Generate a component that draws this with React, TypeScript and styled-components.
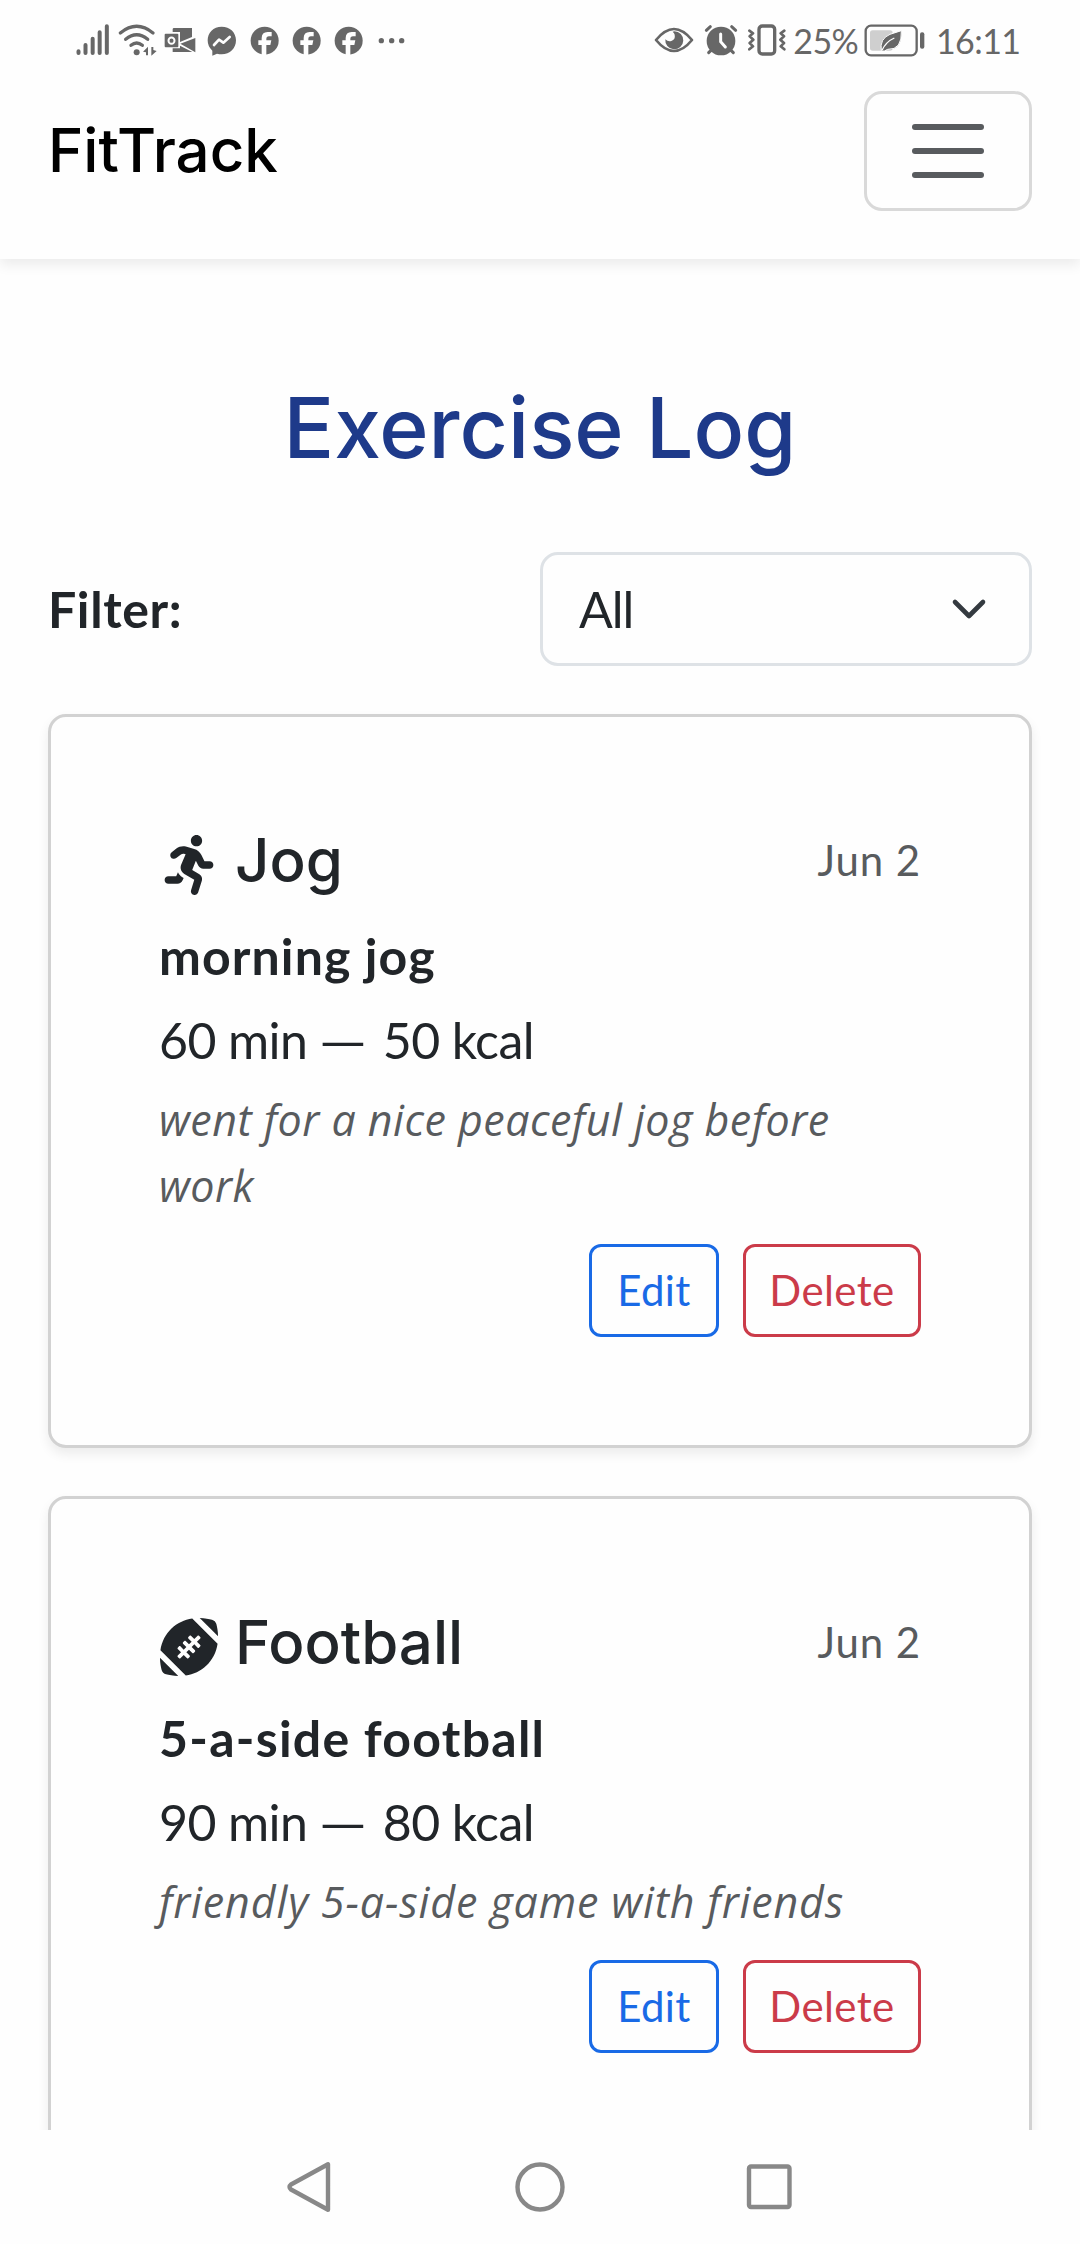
import React from "react";
import styled, { createGlobalStyle } from "styled-components";
import { FaFootballBall, FaRunning } from "react-icons/fa";

const GlobalStyle = createGlobalStyle`
  *, *::before, *::after { box-sizing: border-box; }
  html, body { margin: 0; padding: 0; }
  body {
    background: #fefefe;
    color: #212529;
    font-family: Lato, "Liberation Sans", sans-serif;
  }
`;

const Screen = styled.div`
  display: flex;
  flex-direction: column;
  width: 1080px;
  height: 2244px;
  overflow: hidden;
`;

const Header = styled.header`
  flex: none;
  height: 259px;
  background: #fefefe;
  box-shadow: 0 6px 12px rgba(0, 0, 0, 0.075);
`;

const StatusBar = styled.div`
  display: flex;
  justify-content: space-between;
  height: 91px;
  padding: 10px 63px 0 73px;
  color: #676767;
`;

const StatusGroup = styled.div`
  display: flex;
  height: 60px;
`;

const Glyph = styled.svg<{ $w: number }>`
  display: block;
  flex: none;
  width: ${(p) => p.$w}px;
  height: 60px;
  fill: currentColor;
`;

const StatusText = styled.span<{ $w: number; $indent?: number }>`
  width: ${(p) => p.$w}px;
  padding-left: ${(p) => p.$indent ?? 0}px;
  font-size: 34px;
  line-height: 62px;
  letter-spacing: -0.6px;
  white-space: nowrap;
`;

const NavRow = styled.div`
  display: flex;
  align-items: center;
  justify-content: space-between;
  height: 120px;
  padding: 0 48px;
`;

const Brand = styled.span`
  color: #000;
  font: 500 60px/90px Inter, sans-serif;
  padding-bottom: 2px;
`;

const Toggler = styled.button`
  display: flex;
  flex-direction: column;
  align-items: center;
  justify-content: center;
  gap: 18px;
  width: 168px;
  height: 120px;
  padding: 0;
  border: 3px solid #d9d9d9;
  border-radius: 18px;
  background: transparent;
`;

const TogglerLine = styled.span`
  width: 72px;
  height: 6px;
  border-radius: 3px;
  background: #585b5e;
`;

const Main = styled.main`
  flex: 1;
  min-height: 0;
  padding: 118px 48px 0;
  overflow: hidden;
`;

const Title = styled.h1`
  margin: 0 0 74px;
  color: #1e3a8a;
  font: 500 84px/101px Inter, sans-serif;
  text-align: center;
`;

const FilterRow = styled.div`
  display: flex;
  align-items: center;
  justify-content: space-between;
  height: 114px;
  margin-bottom: 48px;
`;

const FilterLabel = styled.label`
  font-size: 50px;
  line-height: 72px;
  font-weight: 700;
  letter-spacing: 0.6px;
`;

const Select = styled.div`
  display: flex;
  align-items: center;
  justify-content: space-between;
  width: 492px;
  height: 114px;
  padding: 0 41px 0 36px;
  border: 3px solid #dee2e6;
  border-radius: 18px;
  font-size: 50px;
  line-height: 72px;
  letter-spacing: -1px;
`;

const Chevron = styled.svg`
  width: 38px;
  height: 38px;
  fill: none;
  stroke: #343a40;
  stroke-width: 4.6;
  stroke-linecap: round;
  stroke-linejoin: round;
`;

const Card = styled.article`
  margin-bottom: 48px;
  padding: 108px;
  border: 3px solid #d2d2d2;
  border-radius: 18px;
  background: #fefefe;
  box-shadow: 0 6px 12px rgba(0, 0, 0, 0.075);
`;

const CardHead = styled.div`
  display: flex;
  align-items: center;
  justify-content: space-between;
  height: 70px;
  margin-bottom: 25px;
`;

const Activity = styled.h2`
  display: flex;
  align-items: center;
  gap: 16px;
  margin: 0;
  font: 500 60px/72px Inter, sans-serif;
`;

const ActivityIcon = styled.span`
  display: flex;
  width: 60px;
  padding-top: 10px;
`;

const DateText = styled.span`
  color: #585b5e;
  font-size: 42px;
  line-height: 72px;
  letter-spacing: 0.9px;
`;

const Name = styled.div<{ $tracking: number }>`
  margin-bottom: 12px;
  font-size: 50px;
  line-height: 72px;
  font-weight: 700;
  letter-spacing: ${(p) => p.$tracking}px;
`;

const Stats = styled.div`
  margin-bottom: 11px;
  font-size: 50px;
  line-height: 72px;
  letter-spacing: -0.6px;
`;

const Dash = styled.span`
  display: inline-block;
  margin: 0 8px 0 4px;
  transform: scaleX(1.22);
`;

const Note = styled.p<{ $tracking: number }>`
  margin: 0 0 25px;
  padding-right: 24px;
  color: #585b5e;
  font: italic 400 43px/66px "Open Sans", sans-serif;
  letter-spacing: ${(p) => p.$tracking}px;
`;

const Actions = styled.div`
  display: flex;
  justify-content: flex-end;
  gap: 24px;
`;

const ActionButton = styled.button<{ $color: string; $w: number }>`
  width: ${(p) => p.$w}px;
  height: 93px;
  padding: 0;
  border: 3px solid ${(p) => p.$color};
  border-radius: 12px;
  background: transparent;
  color: ${(p) => p.$color};
  font: 400 42px/63px Lato, sans-serif;
  letter-spacing: 0.4px;
`;

const SystemNav = styled.nav`
  display: flex;
  flex: none;
  align-items: flex-start;
  justify-content: center;
  gap: 180px;
  height: 114px;
  padding-top: 31px;
  background: #fefefe;
`;

const NavIcon = styled.svg`
  width: 52px;
  height: 52px;
  fill: none;
  stroke: #888;
  stroke-width: 4.4;
  stroke-linejoin: round;
`;

const Facebook = () => (
  <Glyph $w={42} viewBox="0 0 126 180">
    <circle cx="62" cy="92" r="42" />
    <path
      d="M53 136V105H43V91H53V84Q53 66 71 66H83V79H75Q67 79 67 87V91H82L79 105H67V136Z"
      fill="#fefefe"
    />
  </Glyph>
);

const LeftStatus = () => (
  <StatusGroup>
    <Glyph $w={42} viewBox="40 0 126 180">
      <g stroke="currentColor" strokeWidth="12" strokeLinecap="round">
        <path d="M56.500 124V129M77.500 105V129M99 86V129M120 67V129M141.500 49V129" />
      </g>
    </Glyph>
    <Glyph $w={45} viewBox="166 0 135 180">
      <g fill="none" stroke="currentColor" strokeWidth="10" strokeLinecap="round">
        <path d="M182 69Q231 29 280 69M198 88Q231 61 264 88M214 106Q231 92 248 106" />
      </g>
      <circle cx="231" cy="127" r="9" />
      <path d="M250 125L265 110V136H259V127ZM291 123L275 137V111H281V120Z" />
    </Glyph>
    <Glyph $w={42} viewBox="301 0 126 180">
      <path d="M343 54H397V81L361 96V66H339V58Q339 54 343 54Z" />
      <path d="M362 101L407 84V127ZM361 107L398 126H339V115H361Z" />
      <rect x="315" y="71" width="41" height="41" rx="3" />
      <ellipse cx="335.500" cy="92" rx="9" ry="9.500" fill="none" stroke="#fefefe" strokeWidth="6" />
    </Glyph>
    <Glyph $w={41.667} viewBox="427 0 125 180">
      <path d="M486 50C461 50 444 68 444 91Q444 110 458 122V137L472 131Q479 133 486 133C511 133 529 115 529 91S511 50 486 50Z" />
      <path
        d="M463 105L478 89L491 98L510 81"
        fill="none"
        stroke="#fefefe"
        strokeWidth="8"
        strokeLinejoin="round"
        strokeLinecap="round"
      />
    </Glyph>
    <Facebook />
    <Facebook />
    <Facebook />
    <Glyph $w={40} viewBox="930 0 120 180">
      <circle cx="964" cy="92" r="8" />
      <circle cx="995" cy="92" r="8" />
      <circle cx="1025" cy="92" r="8" />
    </Glyph>
  </StatusGroup>
);

const RightStatus = () => (
  <StatusGroup>
    <Glyph $w={50} viewBox="30 0 150 180">
      <path
        d="M48 90Q102 24 156 90Q102 156 48 90Z"
        fill="none"
        stroke="currentColor"
        strokeWidth="8"
        strokeLinejoin="round"
      />
      <path d="M103 64A27 27 0 1 1 76 88Q84 96 94 93Q107 88 104 74Q103 69 98 65Z" />
    </Glyph>
    <Glyph $w={43.333} viewBox="180 0 130 180">
      <circle cx="243" cy="93" r="43" />
      <g fill="none" stroke="currentColor" strokeWidth="9" strokeLinecap="round">
        <path d="M199 61L211 50M287 61L275 50M213 121L206 128M273 121L280 128" />
      </g>
      <path d="M242 72V95L256 111" fill="none" stroke="#fefefe" strokeWidth="9" strokeLinecap="round" />
    </Glyph>
    <Glyph $w={48} viewBox="310 0 144 180">
      <g fill="none" stroke="currentColor">
        <rect x="358" y="48" width="47" height="84" rx="10" strokeWidth="10" />
        <path
          d="M329 62L340 70L330 79L341 89L330 99L340 109L329 118M434 62L423 70L433 79L422 89L433 99L423 109L434 118"
          strokeWidth="8"
          strokeLinejoin="round"
          strokeLinecap="round"
        />
      </g>
    </Glyph>
    <StatusText $w={68.667} $indent={2}>25%</StatusText>
    <Glyph $w={76} viewBox="660 0 228 180">
      <rect x="677" y="47" width="153" height="89" rx="16" fill="none" stroke="currentColor" strokeWidth="7" />
      <rect x="690" y="61" width="68" height="61" rx="8" fill="#cfcfcf" />
      <path d="M784 62Q787 120 743 118L733 123H724Q718 86 750 73Z" stroke="#fefefe" strokeWidth="3" />
      <path d="M726 121Q738 95 763 84" fill="none" stroke="#fefefe" strokeWidth="4" />
      <rect x="840" y="67" width="13" height="49" rx="6" />
    </Glyph>
    <StatusText $w={81}>16:11</StatusText>
  </StatusGroup>
);

interface Entry {
  icon: React.ReactNode;
  activity: string;
  date: string;
  name: string;
  nameTracking: number;
  minutes: number;
  kcal: number;
  note: string;
  noteTracking: number;
}

const entries: Entry[] = [
  {
    icon: <FaRunning size={60} />,
    activity: "Jog",
    date: "Jun 2",
    name: "morning jog",
    nameTracking: 1.1,
    minutes: 60,
    kcal: 50,
    note: "went for a nice peaceful jog before work",
    noteTracking: 0.48,
  },
  {
    icon: <FaFootballBall size={60} />,
    activity: "Football",
    date: "Jun 2",
    name: "5-a-side football",
    nameTracking: 1.25,
    minutes: 90,
    kcal: 80,
    note: "friendly 5-a-side game with friends",
    noteTracking: 0.86,
  },
];

const ExerciseCard = ({ entry }: { entry: Entry }) => (
  <Card>
    <CardHead>
      <Activity>
        <ActivityIcon>{entry.icon}</ActivityIcon>
        {entry.activity}
      </Activity>
      <DateText>{entry.date}</DateText>
    </CardHead>
    <Name $tracking={entry.nameTracking}>{entry.name}</Name>
    <Stats>
      {entry.minutes} min <Dash>—</Dash> {entry.kcal} kcal
    </Stats>
    <Note $tracking={entry.noteTracking}>{entry.note}</Note>
    <Actions>
      <ActionButton $color="#196ae6" $w={130}>Edit</ActionButton>
      <ActionButton $color="#cb3b49" $w={178}>Delete</ActionButton>
    </Actions>
  </Card>
);

export default function App() {
  return (
    <Screen>
      <GlobalStyle />
      <Header>
        <StatusBar>
          <LeftStatus />
          <RightStatus />
        </StatusBar>
        <NavRow>
          <Brand>FitTrack</Brand>
          <Toggler aria-label="Toggle navigation">
            <TogglerLine />
            <TogglerLine />
            <TogglerLine />
          </Toggler>
        </NavRow>
      </Header>
      <Main>
        <Title>Exercise Log</Title>
        <FilterRow>
          <FilterLabel>Filter:</FilterLabel>
          <Select>
            All
            <Chevron viewBox="0 0 38 38">
              <path d="M5 12L19 26L33 12" />
            </Chevron>
          </Select>
        </FilterRow>
        {entries.map((entry) => (
          <ExerciseCard key={entry.activity} entry={entry} />
        ))}
      </Main>
      <SystemNav>
        <NavIcon viewBox="0 0 52 52">
          <path d="M46 3.200V48.800L9 28.500Q6 26 9 23.500Z" />
        </NavIcon>
        <NavIcon viewBox="0 0 52 52">
          <circle cx="26" cy="26" r="22.500" />
        </NavIcon>
        <NavIcon viewBox="0 0 52 52">
          <rect x="3" y="5.500" width="40.500" height="40.500" rx="2" />
        </NavIcon>
      </SystemNav>
    </Screen>
  );
}
